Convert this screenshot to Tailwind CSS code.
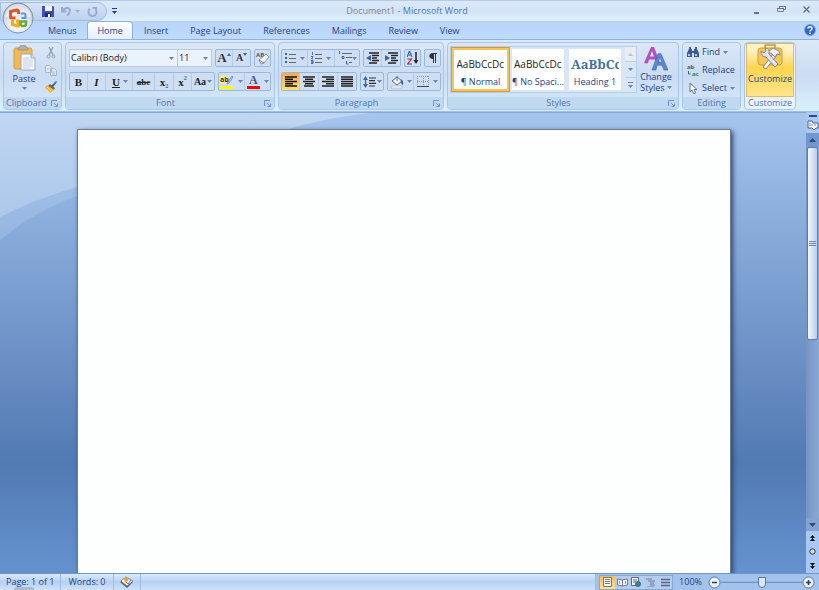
<!DOCTYPE html>
<html lang="en">
<head>
    <meta charset="UTF-8">
    <meta name="viewport" content="width=device-width, initial-scale=1.0">
    <title>Document1 - Microsoft Word</title>
    <script src="https://cdn.jsdelivr.net/npm/@tailwindcss/browser@4"></script>
</head>
<body class="relative flex h-screen flex-col overflow-hidden bg-[#bfdbff] font-['Open_Sans',sans-serif] text-[9px] leading-3 font-medium text-[#1e3f86]">
    <!-- Shared glyphs -->
    <svg class="hidden">
        <symbol id="arrow" viewBox="0 0 5 3"><path d="M0 0h5L2.500 3z" fill="#6486bd"/></symbol>
        <symbol id="launcher" viewBox="0 0 7 7"><path d="M.5 6V.5H6" fill="none" stroke="#6f94c6"/><path d="M3 3l3 3M6.500 3.500v3h-3" fill="none" stroke="#6f94c6"/></symbol>
    </svg>

    <!-- Title bar -->
    <header class="flex h-[21px] shrink-0 items-center border-t border-[#b4cbe8] bg-linear-to-b from-[#dce8f7] via-[#d3e3f7] to-[#dff1fd]">
        <div class="flex h-[19px] items-center gap-[7px] rounded-r-full border border-[#a5bddd] bg-linear-to-b from-[#d6e4f5] to-[#bdd2ee] pr-2 pl-[41px]">
            <button aria-label="Save"><svg class="size-3" viewBox="0 0 12 12"><path d="M0 1h11l1 1v10H0z" fill="#4250b4"/><path d="M3 1h7v5H3z" fill="#eef3fc"/><path d="M3 8h6v4H3z" fill="#20296f"/><path d="M6 9h2v3H6z" fill="#fff"/></svg></button>
            <button aria-label="Undo" class="flex items-center gap-[3px]"><svg class="h-3 w-[11px]" viewBox="0 0 11 12"><path d="M1 2v4.500h4.500M1.500 6C4 2 9 2 9 5.500c0 2-1 3.500-3 5" fill="none" stroke="#94acd2" stroke-width="2"/></svg><svg class="h-[3px] w-[5px] opacity-50"><use href="#arrow"/></svg></button>
            <button aria-label="Redo"><svg class="size-[11px]" viewBox="0 0 12 12"><path d="M3 3C0 6 2 11 6 11s6-5 3-8M6 2h4v4" fill="none" stroke="#94acd2" stroke-width="2"/></svg></button>
        </div>
        <button aria-label="Customize Quick Access Toolbar" class="ml-1"><svg class="h-[6px] w-[7px]" viewBox="0 0 7 6"><path d="M1 0h5v1H1zM1 3h5L3.500 6z" fill="#1e3f86"/></svg></button>
        <h1 class="flex-1 pr-14 text-center text-[#4f78b8]"><span class="text-[#7c8593]">Document1</span> - Microsoft Word</h1>
        <div class="flex items-center gap-4 pr-2 pb-1">
            <button aria-label="Minimize"><svg class="size-[9px]" viewBox="0 0 9 9"><path d="M2 7h5v2H2z" fill="#6a7280"/></svg></button>
            <button aria-label="Restore"><svg class="size-[9px]" viewBox="0 0 9 9"><path d="M2.500 3V1.500h6v3H7M.5 3.500h6v3h-6z" fill="none" stroke="#7a828f"/><path d="M2 1h7v1H2zM0 3h7v1H0z" fill="#6a7280"/></svg></button>
            <button aria-label="Close"><svg class="size-[9px]" viewBox="0 0 9 9"><path d="M1.500 1.500l6 6M7.500 1.500l-6 6" stroke="#6a7280" stroke-width="1.400"/></svg></button>
        </div>
    </header>

    <!-- Office button -->
    <button aria-label="Office Button" class="absolute top-[2px] left-[2px] z-10">
        <svg class="size-8" viewBox="0 0 32 32">
            <defs><radialGradient id="orb" cx=".5" cy=".75" r=".7"><stop offset="0" stop-color="#fff"/><stop offset=".6" stop-color="#dbe3ee"/><stop offset="1" stop-color="#a9b8cc"/></radialGradient></defs>
            <circle cx="16" cy="16" r="15" fill="url(#orb)" stroke="#8092ad"/>
            <path d="M3 15a13 13 0 0 1 26 0q-13-4-26 0z" fill="#fff" opacity=".55"/>
            <path d="M13.500 16H9.500Q8.500 16 8.500 15V9.500l6-1.500q2 0 2 2v2" fill="none" stroke="#e2551e" stroke-width="3"/>
            <path d="M18.500 11.500h3.500q1.500 0 1.500 1.500v3h-4" fill="none" stroke="#5b93d6" stroke-width="2"/>
            <path d="M10.500 18v4.500l5.500 1.500v-5h-2" fill="none" stroke="#f3ad1c" stroke-width="3"/>
            <path d="M19 24h3q2 0 2-2v-2.500h-5.500V24" fill="none" stroke="#6aa93a" stroke-width="2.600"/>
        </svg>
    </button>

    <!-- Ribbon tabs -->
    <nav class="flex h-[18px] shrink-0 items-end bg-linear-to-b from-[#b9d4f7] to-[#bfdbff] pl-[37px]">
        <a href="#" class="flex h-[18px] items-center px-[11px] pt-[2px]">Menus</a>
        <a href="#" class="flex h-[18px] items-center rounded-t border border-b-0 border-[#8db2e3] bg-linear-to-b from-white to-[#e4effc] px-[9px] pt-px">Home</a>
        <a href="#" class="flex h-[18px] items-center px-[11px] pt-[2px]">Insert</a>
        <a href="#" class="flex h-[18px] items-center px-[11px] pt-[2px]">Page Layout</a>
        <a href="#" class="flex h-[18px] items-center px-[11px] pt-[2px]">References</a>
        <a href="#" class="flex h-[18px] items-center px-[11px] pt-[2px]">Mailings</a>
        <a href="#" class="flex h-[18px] items-center px-[11px] pt-[2px]">Review</a>
        <a href="#" class="flex h-[18px] items-center px-[11px] pt-[2px]">View</a>
        <button aria-label="Help" class="mr-[3px] mb-[3px] ml-auto"><svg class="size-3" viewBox="0 0 12 12"><circle cx="6" cy="6" r="5.500" fill="#2b66cf" stroke="#7ea6dd"/><path d="M4 4.500C4 2 8 2 8 4.500 8 6 6 6 6 7.500M6 8.500V10" fill="none" stroke="#fff" stroke-width="1.500"/></svg></button>
    </nav>

    <!-- Ribbon -->
    <main class="flex h-[73px] shrink-0 gap-[3px] border-y border-t-[#8db2e3] border-b-[#9fc0e6] bg-linear-to-b from-[#dce9f8] via-[#cbddf3] to-[#d9f0fb] px-[3px] pt-[2px] pb-px">
        <!-- Clipboard -->
        <section class="flex w-[59px] flex-col rounded border border-[#a9c5e8] bg-linear-to-b from-[#dbe7f5] via-[#c9dcf2] to-[#d6e8fa]">
            <div class="flex flex-1 items-start justify-between px-1 pt-[2px]">
                <button class="flex w-8 flex-col items-center">
                    <svg class="h-[27px] w-6" viewBox="0 0 24 27">
                        <rect x="2" y="3" width="18" height="21" rx="2" fill="#f2b955" stroke="#d39b3e"/>
                        <path d="M6 5h10V3l-2-1-1-2H9L8 2 6 3z" fill="#b5b2a3" stroke="#85837a" stroke-width=".7"/>
                        <path d="M9 9h10l4 4v12H9z" fill="#fff" stroke="#8fa6c9"/><path d="M19 9v4h4" fill="#dce6f4" stroke="#8fa6c9"/>
                        <path d="M11 13h6M11 15h10M11 17h10M11 19h10M11 21h10M11 23h7" stroke="#a9bcd8" stroke-width=".8"/>
                    </svg>
                    <span class="mt-px">Paste</span>
                    <svg class="mt-[2px] h-[3px] w-[5px]"><use href="#arrow"/></svg>
                </button>
                <div class="flex flex-col gap-[5px] pt-[2px]">
                    <button aria-label="Cut"><svg class="size-3" viewBox="0 0 12 12"><path d="M4 0l4 8M8 0L4 8" stroke="#8f9fb8" stroke-width="1.400"/><circle cx="3.500" cy="9.500" r="1.500" fill="none" stroke="#8f9fb8"/><circle cx="8.500" cy="9.500" r="1.500" fill="none" stroke="#8f9fb8"/></svg></button>
                    <button aria-label="Copy"><svg class="size-3" viewBox="0 0 12 12"><path d="M.5 1.500h4l2 2v5h-6zM5.500 4.500h4l2 2v5h-6z" fill="#e3eaf4" stroke="#a5b5cd"/><path d="M7 8h3M7 10h3M2 5h2" stroke="#a5b5cd"/></svg></button>
                    <button aria-label="Format Painter"><svg class="size-3" viewBox="0 0 12 12"><path d="M11 0l1 1-4 5-2-1z" fill="#3f5fa8"/><path d="M5 3l5 4-1 2-6-4z" fill="#6b6250"/><path d="M2 4l7 5-4 3-5-5z" fill="#f0b735"/><path d="M2 6l4 4M1 8l3 3" stroke="#fce29a" stroke-width=".8"/></svg></button>
                </div>
            </div>
            <footer class="flex h-3 items-center rounded-b bg-[#c1d8f1] px-[2px] text-[#5276ae]"><h2 class="flex-1">Clipboard</h2><button aria-label="Clipboard options" class="px-px"><svg class="size-[7px]"><use href="#launcher"/></svg></button></footer>
        </section>

        <!-- Font -->
        <section class="flex w-[210px] flex-col rounded border border-[#a9c5e8] bg-linear-to-b from-[#dbe7f5] via-[#c9dcf2] to-[#d6e8fa]">
            <div class="flex flex-1 flex-col gap-[5px] px-[3px] pt-[6px]">
                <div class="flex gap-[3px]">
                    <div class="flex h-[18px] border border-[#b3cbe9] bg-[#eaf2fb] text-[#1a1a1a]">
                        <label class="relative border-r border-[#b3cbe9]"><select aria-label="Font" class="h-4 w-[107px] appearance-none pl-px"><option>Calibri (Body)</option></select><svg class="pointer-events-none absolute top-[7px] right-[3px] h-[3px] w-[5px]"><use href="#arrow"/></svg></label>
                        <label class="relative"><select aria-label="Font size" class="h-4 w-[33px] appearance-none pl-px"><option>11</option></select><svg class="pointer-events-none absolute top-[7px] right-[3px] h-[3px] w-[5px]"><use href="#arrow"/></svg></label>
                    </div>
                    <div class="flex h-[18px] items-stretch divide-x divide-[#b5cbe8] rounded-xs border border-[#9ab8dd] bg-[#cfdff3] font-['Liberation_Serif',serif] font-bold text-[#333]">
                        <button aria-label="Grow Font" class="flex w-[17px] items-center justify-center text-[13px]">A<svg class="mb-2 h-[3px] w-1" viewBox="0 0 4 3"><path d="M0 3h4L2 0z" fill="#3a62ac"/></svg></button>
                        <button aria-label="Shrink Font" class="flex w-[17px] items-center justify-center text-[10px]">A<svg class="mb-2 h-[3px] w-1" viewBox="0 0 4 3"><path d="M0 0h4L2 3z" fill="#3a62ac"/></svg></button>
                    </div>
                    <button aria-label="Clear Formatting" class="flex h-[18px] w-[19px] items-center justify-center rounded-xs border border-[#9ab8dd] bg-[#cfdff3]"><svg class="h-[14px] w-[15px] overflow-visible" viewBox="0 0 15 14"><text x="1" y="6" font-size="6" font-weight="bold" fill="#555">AB</text><path d="M4 9l7-6 3 3-5 6-3 1z" fill="#f0f3f8" stroke="#777f90" stroke-width=".8"/><path d="M4 9l5 3" stroke="#777f90"/></svg></button>
                </div>
                <div class="flex gap-[3px]">
                    <div class="flex h-[19px] items-stretch divide-x divide-[#b5cbe8] rounded-xs border border-[#9ab8dd] bg-[#cfdff3] font-['Liberation_Serif',serif] text-[11px] font-bold text-[#222]">
                        <button aria-label="Bold" class="w-[18px]">B</button>
                        <button aria-label="Italic" class="w-[18px] italic">I</button>
                        <button aria-label="Underline" class="flex w-[27px] items-center justify-between pr-1 pl-[6px]"><span class="underline">U</span><svg class="h-[3px] w-[5px]"><use href="#arrow"/></svg></button>
                        <button aria-label="Strikethrough" class="w-[22px] text-[9px] line-through">abc</button>
                        <button aria-label="Subscript" class="flex w-[19px] items-center justify-center">x<span class="mt-2 text-[6px] text-[#3a62ac]">2</span></button>
                        <button aria-label="Superscript" class="flex w-[18px] items-center justify-center">x<span class="mb-2 text-[6px] text-[#3a62ac]">2</span></button>
                        <button aria-label="Change Case" class="flex w-[22px] items-center justify-center text-[10px]">Aa<svg class="ml-px h-[3px] w-[5px]"><use href="#arrow"/></svg></button>
                    </div>
                    <div class="flex h-[19px] items-stretch divide-x divide-[#b5cbe8] rounded-xs border border-[#9ab8dd] bg-[#cfdff3]">
                        <button aria-label="Highlight" class="flex w-[26px] items-center justify-center gap-1"><svg class="size-[14px] overflow-visible" viewBox="0 0 14 14"><path d="M0 1h7v7H0z" fill="#fff27a"/><text x="0" y="7" font-size="7" font-weight="bold" fill="#333">ab</text><path d="M12 1l1 1-4 6-2 1 1-2z" fill="#d9e4f4" stroke="#5274ac" stroke-width=".8"/><path d="M0 11h13v3H0z" fill="#ff0"/></svg><svg class="h-[3px] w-[5px]"><use href="#arrow"/></svg></button>
                        <button aria-label="Font Color" class="flex w-[25px] items-center justify-center gap-[3px]"><svg class="size-[14px] overflow-visible" viewBox="0 0 14 14"><text x="2" y="9" font-size="12" font-weight="bold" fill="#3b5490" font-family="Liberation Serif">A</text><path d="M0 11h13v3H0z" fill="#f00"/></svg><svg class="h-[3px] w-[5px]"><use href="#arrow"/></svg></button>
                    </div>
                </div>
            </div>
            <footer class="flex h-3 items-center rounded-b bg-[#c1d8f1] px-[2px] text-[#5276ae]"><h2 class="flex-1 text-center">Font</h2><button aria-label="Font options" class="px-px"><svg class="size-[7px]"><use href="#launcher"/></svg></button></footer>
        </section>

        <!-- Paragraph -->
        <section class="flex w-[166px] flex-col rounded border border-[#a9c5e8] bg-linear-to-b from-[#dbe7f5] via-[#c9dcf2] to-[#d6e8fa]">
            <div class="flex flex-1 flex-col gap-[5px] px-[2px] pt-[6px]">
                <div class="flex gap-[3px]">
                    <div class="flex h-[18px] items-stretch divide-x divide-[#b5cbe8] rounded-xs border border-[#9ab8dd] bg-[#cfdff3]">
                        <button aria-label="Bullets" class="flex w-[26px] items-center justify-center gap-1"><svg class="h-3 w-[11px]" viewBox="0 0 11 12"><path d="M0 1h2v2H0zM0 5h2v2H0zM0 9h2v2H0z" fill="#3a62ac"/><path d="M4 2.500h7M4 6.500h7M4 10.500h7" stroke="#666"/></svg><svg class="h-[3px] w-[5px]"><use href="#arrow"/></svg></button>
                        <button aria-label="Numbering" class="flex w-[27px] items-center justify-center gap-1"><svg class="h-3 w-[11px]" viewBox="0 0 11 12"><path d="M1.500 0v3M0 4.500h2L.5 7H2M0 8.500h2v1.500H0h2v1.500H0" fill="none" stroke="#3a62ac" stroke-width=".9"/><path d="M4 2.500h7M4 6.500h7M4 10.500h7" stroke="#666"/></svg><svg class="h-[3px] w-[5px]"><use href="#arrow"/></svg></button>
                        <button aria-label="Multilevel List" class="flex w-6 items-center justify-center"><svg class="size-[14px]" viewBox="0 0 14 14"><path d="M1.500 0v3M4 5.500h2v2H4zM8.500 10v3h2" fill="none" stroke="#3a62ac"/><path d="M4 2.500h10M8 6.500h6M11 11.500h3" stroke="#666"/></svg><svg class="h-[3px] w-[5px]"><use href="#arrow"/></svg></button>
                    </div>
                    <div class="flex h-[18px] items-stretch divide-x divide-[#b5cbe8] rounded-xs border border-[#9ab8dd] bg-[#cfdff3]">
                        <button aria-label="Decrease Indent" class="flex w-[18px] items-center justify-center"><svg class="h-3 w-[13px]" viewBox="0 0 13 12"><path d="M3 1h10M6 3.500h7M6 6h5M6 8.500h7M3 11h8" stroke="#222" stroke-width="1.500"/><path d="M5 3v6L0 6z" fill="#3a62ac"/></svg></button>
                        <button aria-label="Increase Indent" class="flex w-[18px] items-center justify-center"><svg class="h-3 w-[13px]" viewBox="0 0 13 12"><path d="M3 1h10M6 3.500h7M6 6h5M6 8.500h7M3 11h8" stroke="#222" stroke-width="1.500"/><path d="M0 3v6l5-3z" fill="#3a62ac"/></svg></button>
                    </div>
                    <button aria-label="Sort" class="flex h-[18px] w-[18px] items-center justify-center rounded-xs border border-[#9ab8dd] bg-[#cfdff3]"><svg class="h-[14px] w-3" viewBox="0 0 12 14"><path d="M0 6l2.500-6L5 6M1 4h3" fill="none" stroke="#3a62ac" stroke-width="1.200"/><path d="M.5 8h4l-4 5h4.500" fill="none" stroke="#9c2f3d" stroke-width="1.200"/><path d="M9 1v9" stroke="#222" stroke-width="1.500"/><path d="M6.500 9h5L9 13z" fill="#222"/></svg></button>
                    <button aria-label="Show Paragraph Marks" class="flex h-[18px] w-[18px] items-center justify-center rounded-xs border border-[#9ab8dd] bg-[#cfdff3]"><svg class="h-[10px] w-2" viewBox="0 0 8 10"><path d="M4 0h4v1H7v9H6V1H5v9H4V6C-1 6-1 0 4 0z" fill="#333"/></svg></button>
                </div>
                <div class="flex gap-[3px]">
                    <div class="flex h-[19px] items-stretch divide-x divide-[#b5cbe8] rounded-xs border border-[#9ab8dd] bg-[#cfdff3]">
                        <button aria-label="Align Left" class="flex w-[18px] items-center justify-center bg-linear-to-b from-[#f5a94c] to-[#ffe17f]"><svg class="h-[11px] w-3" viewBox="0 0 12 11"><path d="M0 1h12M0 3.200h8M0 5.500h12M0 7.800h8M0 10h12" stroke="#111" stroke-width="1.500"/></svg></button>
                        <button aria-label="Center" class="flex w-[19px] items-center justify-center"><svg class="h-[11px] w-3" viewBox="0 0 12 11"><path d="M0 1h12M2 3.200h8M0 5.500h12M2 7.800h8M1 10h10" stroke="#222" stroke-width="1.500"/></svg></button>
                        <button aria-label="Align Right" class="flex w-[19px] items-center justify-center"><svg class="h-[11px] w-3" viewBox="0 0 12 11"><path d="M0 1h12M4 3.200h8M0 5.500h12M4 7.800h8M0 10h12" stroke="#222" stroke-width="1.500"/></svg></button>
                        <button aria-label="Justify" class="flex w-[18px] items-center justify-center"><svg class="h-[11px] w-3" viewBox="0 0 12 11"><path d="M0 1h12M0 3.200h12M0 5.500h12M0 7.800h12M0 10h12" stroke="#222" stroke-width="1.500"/></svg></button>
                    </div>
                    <button aria-label="Line Spacing" class="flex h-[19px] w-[24px] items-center justify-center rounded-xs border border-[#9ab8dd] bg-[#cfdff3]"><svg class="h-3 w-[13px]" viewBox="0 0 13 12"><path d="M2.500 2v8" stroke="#3a62ac" stroke-width="1.200"/><path d="M0 4h5L2.500 0zM0 8h5l-2.500 4z" fill="#3a62ac"/><path d="M6 2h7M6 4.700h6M6 7.300h7M6 10h6" stroke="#333" stroke-width="1.200"/></svg><svg class="ml-px h-[3px] w-[5px]"><use href="#arrow"/></svg></button>
                    <div class="flex h-[19px] items-stretch divide-x divide-[#b5cbe8] rounded-xs border border-[#9ab8dd] bg-[#cfdff3]">
                        <button aria-label="Shading" class="flex w-[26px] items-center justify-center gap-[3px]"><svg class="size-[14px]" viewBox="0 0 14 14"><path d="M2 6l5-4 5 4-5 4z" fill="#f5f7fb" stroke="#5d6a80"/><path d="M7 1v5" stroke="#5d6a80"/><path d="M11 4q3 2 2 6-3-1-2-6z" fill="#3a62ac"/><path d="M1 11h11v2H1z" fill="#fff" stroke="#9aa8bd" stroke-width=".6"/></svg><svg class="h-[3px] w-[5px]"><use href="#arrow"/></svg></button>
                        <button aria-label="Borders" class="flex w-[26px] items-center justify-center gap-1"><svg class="h-[11px] w-3" viewBox="0 0 12 11"><path d="M.5 0v10M6.500 0v10M11.500 0v10M0 .5h12M0 5.500h12" stroke="#8a95a8" stroke-dasharray="1 1"/><path d="M0 10.500h12" stroke="#444"/></svg><svg class="h-[3px] w-[5px]"><use href="#arrow"/></svg></button>
                    </div>
                </div>
            </div>
            <footer class="flex h-3 items-center rounded-b bg-[#c1d8f1] px-[2px] text-[#5276ae]"><h2 class="flex-1 text-center">Paragraph</h2><button aria-label="Paragraph options" class="px-px"><svg class="size-[7px]"><use href="#launcher"/></svg></button></footer>
        </section>

        <!-- Styles -->
        <section class="flex w-[232px] flex-col rounded border border-[#a9c5e8] bg-linear-to-b from-[#dbe7f5] via-[#c9dcf2] to-[#d6e8fa]">
            <div class="flex flex-1 items-start justify-between pt-[3px] pr-1 pl-[2px]">
                <div class="flex h-[47px] border border-[#b8cfec] bg-[#d9e6f6]">
                    <button class="flex h-[45px] w-[59px] flex-col items-center justify-between overflow-hidden border-3 border-[#f7c556] bg-white pt-2 pb-px outline-1 -outline-offset-1 outline-[#d99a3c]"><span class="w-12 overflow-hidden text-left text-[10px] whitespace-nowrap text-[#222]">AaBbCcDc</span><span>¶ Normal</span></button>
                    <button class="mt-[2px] ml-[2px] flex h-[41px] w-[52px] flex-col items-center justify-between overflow-hidden bg-white pt-[9px] pb-[2px]"><span class="w-12 overflow-hidden text-left text-[10px] whitespace-nowrap text-[#222]">AaBbCcDc</span><span class="whitespace-nowrap">¶ No Spaci...</span></button>
                    <button class="mt-[2px] ml-[5px] flex h-[41px] w-[52px] flex-col items-center justify-between overflow-hidden bg-white pt-[9px] pb-[2px]"><span class="w-12 overflow-hidden text-left font-['Noto_Serif','Liberation_Serif',serif] text-[13px] font-bold whitespace-nowrap text-[#44719f]">AaBbCc</span><span>Heading 1</span></button>
                    <div class="ml-[4px] flex w-[11px] flex-col divide-y divide-[#b8cfec]">
                        <button aria-label="Scroll styles up" class="flex flex-1 items-center justify-center bg-[#e9edf2]"><svg class="h-[3px] w-[5px] rotate-180 opacity-40"><use href="#arrow"/></svg></button>
                        <button aria-label="Scroll styles down" class="flex flex-1 items-center justify-center"><svg class="h-[3px] w-[5px]"><use href="#arrow"/></svg></button>
                        <button aria-label="More styles" class="flex flex-1 items-center justify-center"><svg class="h-[6px] w-[5px]" viewBox="0 0 5 6"><path d="M0 0h5v1H0zM0 3h5L2.500 6z" fill="#6486bd"/></svg></button>
                    </div>
                </div>
                <button class="flex w-9 flex-col items-center">
                    <svg class="h-[25px] w-6" viewBox="0 0 24 26" preserveAspectRatio="none"><path d="M0 18L7 1h3l6 17h-4l-1-4H5l-1 4zM6 11h4L8 5z" fill="#b14fbb" fill-rule="evenodd"/><path d="M8 25l6-17h3l7 17h-4l-2-5h-5l-1 5zM14 17h4l-2-5z" fill="#5d86cf" stroke="#3f63ac" stroke-width=".6" fill-rule="evenodd"/></svg>
                    <span class="leading-[11px]">Change</span>
                    <span class="flex items-center gap-[2px] leading-[11px]">Styles<svg class="h-[3px] w-[5px]"><use href="#arrow"/></svg></span>
                </button>
            </div>
            <footer class="flex h-3 items-center rounded-b bg-[#c1d8f1] px-[2px] text-[#5276ae]"><h2 class="flex-1 text-center">Styles</h2><button aria-label="Styles options" class="px-px"><svg class="size-[7px]"><use href="#launcher"/></svg></button></footer>
        </section>

        <!-- Editing -->
        <section class="flex w-[59px] flex-col rounded border border-[#a9c5e8] bg-linear-to-b from-[#dbe7f5] via-[#c9dcf2] to-[#d6e8fa]">
            <div class="flex flex-1 flex-col items-start gap-[6px] pt-[3px] pl-1">
                <button class="flex items-center gap-[3px]"><svg class="size-3" viewBox="0 0 12 12"><path d="M2 1h2v2h1v2h2V3h1V1h2v2l2 4v4H7V7H5v4H0V7l2-4z" fill="#3c5a94"/><path d="M1 8h2v2H1zM8 8h2v2H8z" fill="#b7cbe9"/></svg>Find<svg class="h-[3px] w-[5px]"><use href="#arrow"/></svg></button>
                <button class="flex items-center gap-[3px]"><svg class="size-3 overflow-visible" viewBox="0 0 12 12"><text x="0" y="5" font-size="6" font-weight="bold" fill="#555">ab</text><text x="5" y="12" font-size="6" font-weight="bold" fill="#2f8a45">ac</text><path d="M1.500 7v3h2" fill="none" stroke="#3a62ac"/></svg>Replace</button>
                <button class="flex items-center gap-[3px]"><svg class="size-3" viewBox="0 0 12 12"><path d="M3 1v9l2-2 2 4 1.500-1L7 7.500h3z" fill="#fff" stroke="#56647d" stroke-width=".9"/></svg>Select<svg class="h-[3px] w-[5px]"><use href="#arrow"/></svg></button>
            </div>
            <footer class="flex h-3 items-center justify-center rounded-b bg-[#c1d8f1] text-[#5276ae]"><h2>Editing</h2></footer>
        </section>

        <!-- Customize -->
        <section class="flex w-[52px] flex-col rounded border border-[#a9c5e8] bg-[#eaf3fd]">
            <button class="mx-px flex flex-1 flex-col items-center justify-start border border-[#d9bc6f] bg-linear-to-b from-[#fff3c4] from-10% via-[#ffd54c] via-45% to-[#ffe68a]">
                <svg class="h-[26px] w-[26px]" viewBox="0 0 26 26">
                    <rect x="1" y="4" width="24" height="17" rx="3" fill="#f7c755" stroke="#c99b42"/><path d="M8 4V1h10v3" fill="none" stroke="#c99b42" stroke-width="1.500"/>
                    <path d="M6 23L17 9l3 2L9 25z" fill="#f4f4f0" stroke="#8a8777"/><path d="M11 8l5-4 6 3 1 4-3-1-2 3-3-3z" fill="#eceef2" stroke="#7e8694"/>
                    <path d="M4 7l3 2 2-2-1-3q5 0 4 6l9 10-3 3-9-10q-5 0-5-6z" fill="#dfe4ec" stroke="#7e8694"/>
                </svg>
                <span class="mt-[3px]">Customize</span>
            </button>
            <footer class="flex h-3 shrink-0 items-center justify-center text-[#5276ae]"><h2>Customize</h2></footer>
        </section>
    </main>

    <!-- Workspace -->
    <div class="flex min-h-0 flex-1 bg-linear-to-b from-[#a6c5ef] via-[#527ab3] via-76% to-[#6592ce]">
        <div class="relative flex min-w-0 flex-1 overflow-hidden border-t border-[#86a9d4] pt-4 pr-[75px] pl-[77px]">
            <svg class="absolute inset-0 size-full">
                <defs><linearGradient id="sheen" x1="0" y1="0" x2="0" y2="1"><stop offset="0" stop-color="#d2e3f6" stop-opacity=".5"/><stop offset="1" stop-color="#c8dcf4" stop-opacity=".4"/></linearGradient></defs>
                <path d="M0 0h370Q320 6 285 17 160 43 77 83 35 98 0 127z" fill="#c5daf4" opacity=".25"/>
                <path d="M0 0h370Q320 6 285 17 160 43 77 74 35 86 0 104z" fill="url(#sheen)"/>
            </svg>
            <article class="relative flex-1 border border-b-0 border-[#6d7a90] bg-[#fdfefe] shadow-[2px_2px_5px_#2b4670]" contenteditable="true" aria-label="Document page"></article>
        </div>

        <!-- Vertical scroll bar -->
        <aside class="flex w-[13px] flex-col items-center bg-[#a9c8f3]">
            <div class="mt-[3px] h-[2px] w-2 bg-[#2f4a7c]"></div>
            <button aria-label="View Ruler" class="my-[2px]"><svg class="size-3" viewBox="0 0 12 12"><path d="M1 2h4l1 2h5v5H9l-2 2-2-2H1z" fill="#f2f6fb" stroke="#4b6186"/><path d="M3 4v3M5 5v2M8 5v2" stroke="#7e92b3"/></svg></button>
            <button aria-label="Scroll up" class="flex h-[14px] w-full shrink-0 items-center justify-center bg-[#7297cf]"><svg class="h-1 w-[7px]" viewBox="0 0 7 4"><path d="M0 4h7L3.500 0z" fill="#2f4a7c"/></svg></button>
            <div class="w-full flex-1 bg-linear-to-r from-[#7694c3] to-[#8caad6] px-px">
                <div class="flex h-[52%] flex-col items-center justify-center gap-px rounded-xs border border-[#5d7cae] bg-linear-to-r from-[#f4f8fd] to-[#bccde8]">
                    <i class="h-px w-[7px] bg-[#6f87ac]"></i><i class="h-px w-[7px] bg-[#6f87ac]"></i><i class="h-px w-[7px] bg-[#6f87ac]"></i>
                </div>
            </div>
            <button aria-label="Scroll down" class="flex h-[13px] w-full shrink-0 items-center justify-center bg-[#84a3d3]"><svg class="h-1 w-[7px]" viewBox="0 0 7 4"><path d="M0 0h7L3.500 4z" fill="#2f4a7c"/></svg></button>
            <div class="flex h-[42px] w-full flex-col items-center justify-around">
                <button aria-label="Previous Page"><svg class="h-[6px] w-[5px]" viewBox="0 0 5 6"><path d="M0 3h5L2.500 0zM0 6h5L2.500 3z" fill="#111"/></svg></button>
                <button aria-label="Select Browse Object"><svg class="size-[7px]" viewBox="0 0 7 7"><circle cx="3.500" cy="3.500" r="2.700" fill="#d8dde5" stroke="#333"/></svg></button>
                <button aria-label="Next Page"><svg class="h-[6px] w-[5px]" viewBox="0 0 5 6"><path d="M0 0h5L2.500 3zM0 3h5L2.500 6z" fill="#111"/></svg></button>
            </div>
        </aside>
    </div>

    <!-- Status bar -->
    <footer class="flex h-[17px] shrink-0 items-stretch border-t border-[#6f94c8] bg-linear-to-b from-[#dbe9fb] via-[#b6d1f3] to-[#cfe1f8]">
        <button class="border-r border-[#9dbbe2] px-[6px]">Page: 1 of 1</button>
        <button class="border-r border-[#9dbbe2] px-[7px]">Words: 0</button>
        <button aria-label="Proofing" class="border-r border-[#9dbbe2] px-[6px]"><svg class="h-3 w-[14px]" viewBox="0 0 14 12"><path d="M0 6l5-4 8 4-6 6z" fill="#4b5f8a"/><path d="M1 5l5-4 7 4-6 5z" fill="#fff" stroke="#56647d" stroke-width=".7"/><path d="M4 3l3-2 2 3-4 3z" fill="#f0a32f"/><path d="M6 6l2 2 3-4" fill="none" stroke="#5274ac"/></svg></button>
        <div class="ml-auto flex items-center border-l border-[#9dbbe2] bg-[#a3c3ec] pr-1 pl-[3px]">
            <div class="flex h-[15px] border border-[#86a8d6] bg-[#b4cdef]">
                <button aria-label="Print Layout" class="flex w-[15px] items-center justify-center bg-linear-to-b from-[#f9b861] to-[#ffe391]"><svg class="h-[10px] w-[9px]" viewBox="0 0 9 10"><path d="M.5.5h8v9h-8z" fill="#fff" stroke="#777"/><path d="M2 2.500h5M2 4.500h5M2 6.500h5" stroke="#777"/></svg></button>
                <button aria-label="Full Screen Reading" class="flex w-[14px] items-center justify-center"><svg class="h-[9px] w-[11px]" viewBox="0 0 11 9"><path d="M.5 1l5 1 5-1v6l-5 1-5-1zM5.500 2v6" fill="#f4f6fa" stroke="#6d7a92"/><path d="M2.500 3v3M8.500 3v3" stroke="#8a97ad"/></svg></button>
                <button aria-label="Web Layout" class="flex w-[14px] items-center justify-center"><svg class="size-[10px]" viewBox="0 0 10 10"><path d="M.5.5h7v8h-7z" fill="#f4f6fa" stroke="#5b6880"/><path d="M2 3h4M2 5h3" stroke="#5b6880"/><circle cx="7" cy="7" r="2.500" fill="#3f8a6a" stroke="#2d66a8"/></svg></button>
                <button aria-label="Outline" class="flex w-[15px] items-center justify-center"><svg class="size-[9px]" viewBox="0 0 9 9"><path d="M0 1h6M2 3h7M4 5h4M4 7h5M1 9h7" stroke="#667591" stroke-width=".9"/></svg></button>
                <button aria-label="Draft" class="flex w-[14px] items-center justify-center"><svg class="size-[9px]" viewBox="0 0 9 9"><path d="M0 1.500h9M0 4.500h9M0 7.500h9" stroke="#5b6880" stroke-width="1.300"/></svg></button>
            </div>
            <button class="mx-[6px]">100%</button>
            <button aria-label="Zoom Out"><svg class="size-[13px]" viewBox="0 0 13 13"><circle cx="6.500" cy="6.500" r="5.500" fill="#e9f1fb" stroke="#5876a8"/><path d="M4 6.500h5" stroke="#333f57" stroke-width="1.500"/></svg></button>
            <input type="range" aria-label="Zoom" min="0" max="100" value="50" class="h-3 w-[81px] appearance-none bg-linear-to-b from-transparent from-45% via-[#4f6fa6] via-50% to-transparent to-60% [&::-webkit-slider-thumb]:h-[11px] [&::-webkit-slider-thumb]:w-2 [&::-webkit-slider-thumb]:appearance-none [&::-webkit-slider-thumb]:rounded-b-full [&::-webkit-slider-thumb]:border [&::-webkit-slider-thumb]:border-[#5876a8] [&::-webkit-slider-thumb]:bg-[#dce7f6]">
            <button aria-label="Zoom In"><svg class="size-[13px]" viewBox="0 0 13 13"><circle cx="6.500" cy="6.500" r="5.500" fill="#e9f1fb" stroke="#5876a8"/><path d="M4 6.500h5M6.500 4v5" stroke="#333f57" stroke-width="1.500"/></svg></button>
        </div>
    </footer>
    <div class="absolute bottom-0 left-[14px] h-[3px] w-5 rounded-t-full bg-[#a9bccb]"></div>
</body>
</html>
